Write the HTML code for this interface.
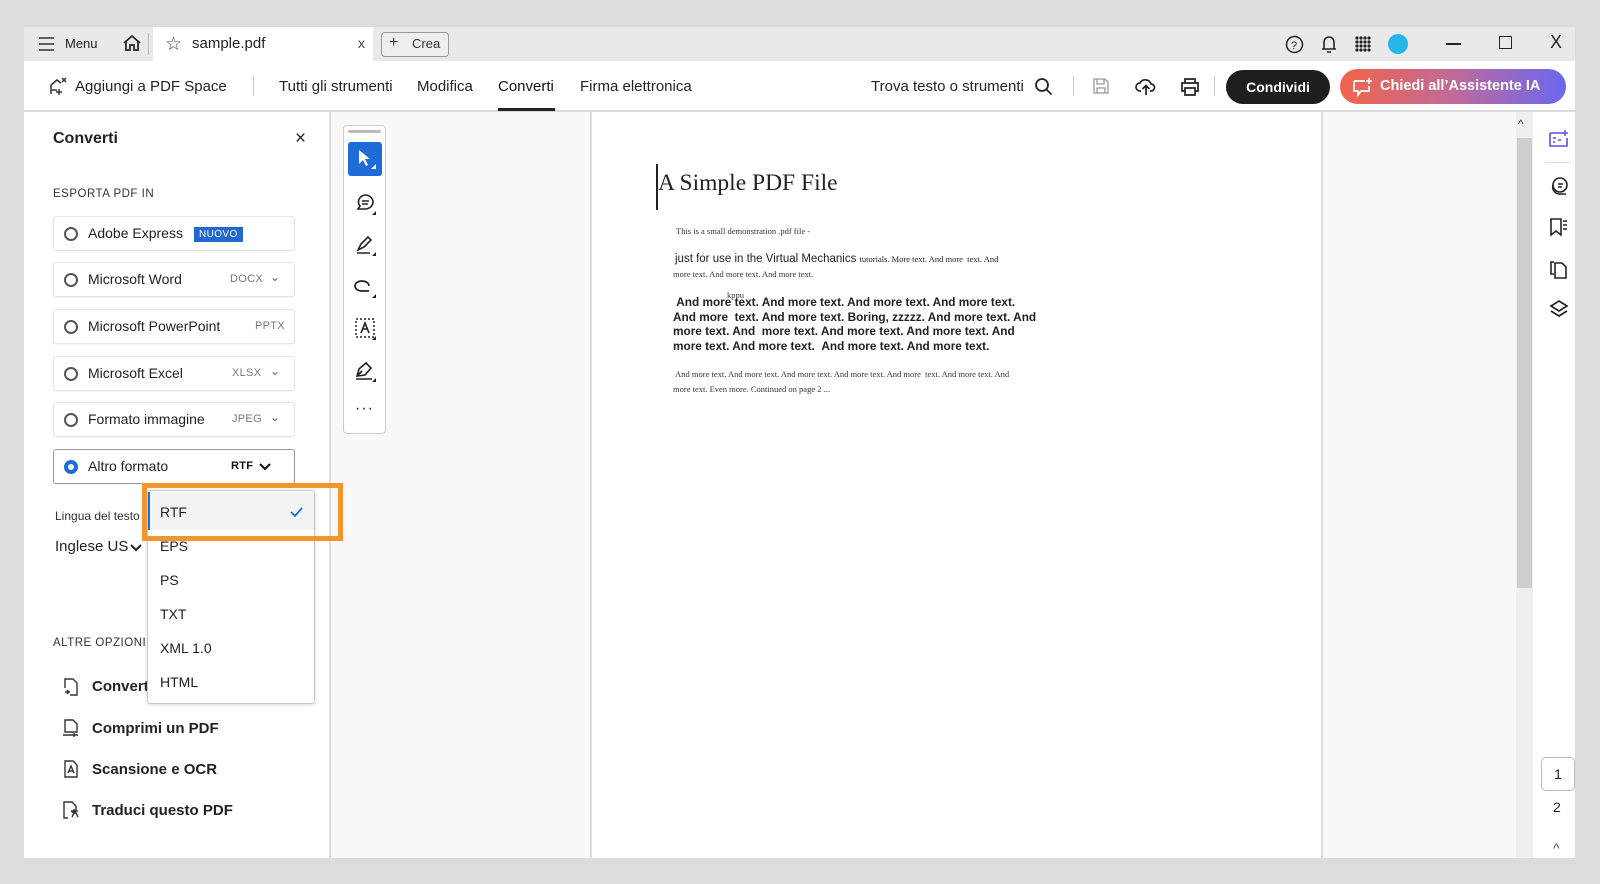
<!DOCTYPE html>
<html><head><meta charset="utf-8"><style>
*{box-sizing:border-box;margin:0;padding:0}
body{width:1600px;height:884px;background:#dcdcdc;font-family:"Liberation Sans",sans-serif;color:#222;position:relative;overflow:hidden}
.a{position:absolute}
.t{position:absolute;white-space:nowrap}
.opt{position:absolute;left:53px;width:242px;height:35px;border:1px solid #e4e4e4;border-radius:3px;background:#fff;box-shadow:0 1px 1px rgba(0,0,0,.04)}
.opt .r{position:absolute;left:10px;top:10px;width:14px;height:14px;border:2px solid #555;border-radius:50%}
.opt .l{position:absolute;left:34px;top:8px;font-size:14px;color:#222}
.opt .f{position:absolute;top:10px;font-size:11px;color:#777;letter-spacing:.3px}
.opt .c{position:absolute;right:14px;top:7px;font-size:12px;color:#666}
.dd{position:absolute;left:147px;width:168px;font-size:14px;padding-left:13px;height:34px;line-height:34px}
.ser{font-family:"Liberation Serif",serif}
.ic{position:absolute}
</style></head><body>
<!-- window -->
<div class="a" style="left:24px;top:27px;width:1551px;height:34px;background:#e9e9e9"></div>
<div class="a" style="left:153px;top:27px;width:220px;height:34px;background:#fff"></div>
<div class="a" style="left:24px;top:61px;width:1551px;height:50px;background:#fff;border-bottom:1px solid #d8d8d8"></div>
<!-- tab bar -->
<svg class="ic" style="left:38px;top:36px" width="18" height="16"><path d="M1 2h15M1 8h15M1 14h15" stroke="#333" stroke-width="1.6"/></svg>
<div class="t" style="left:65px;top:36px;font-size:13px;color:#222">Menu</div>
<svg class="ic" style="left:122px;top:33px" width="20" height="20" viewBox="0 0 20 20"><path d="M2 10L10 3l8 7M4 8v9h4v-5h4v5h4V8" fill="none" stroke="#222" stroke-width="1.7"/></svg>
<div class="a" style="left:148px;top:33px;width:1px;height:22px;background:#bbb"></div>
<div class="t" style="left:165px;top:33px;font-size:19px;color:#444">☆</div>
<div class="t" style="left:192px;top:35px;font-size:15px;color:#222">sample.pdf</div>
<div class="t" style="left:358px;top:35px;font-size:14px;color:#444">x</div>
<div class="a" style="left:381px;top:32px;width:68px;height:25px;border:1px solid #999;border-radius:4px;background:#eee"></div>
<div class="t" style="left:389px;top:34px;font-size:16px;color:#333">+</div>
<div class="t" style="left:412px;top:36px;font-size:13px;color:#333">Crea</div>
<svg class="ic" style="left:1285px;top:35px" width="19" height="19"><circle cx="9.5" cy="9.5" r="8" fill="none" stroke="#222" stroke-width="1.5"/><text x="6" y="14" font-size="11" font-family="Liberation Sans" fill="#222">?</text></svg>
<svg class="ic" style="left:1320px;top:34px" width="18" height="20"><path d="M4 15V8a5 5 0 0110 0v7zM2 15h14M7 18h4" fill="none" stroke="#222" stroke-width="1.6"/></svg>
<svg class="ic" style="left:1355px;top:36px" width="16" height="16"><g fill="#222"><circle cx="2" cy="2" r="1.6"/><circle cx="6" cy="2" r="1.6"/><circle cx="10" cy="2" r="1.6"/><circle cx="14" cy="2" r="1.6"/><circle cx="2" cy="6" r="1.6"/><circle cx="6" cy="6" r="1.6"/><circle cx="10" cy="6" r="1.6"/><circle cx="14" cy="6" r="1.6"/><circle cx="2" cy="10" r="1.6"/><circle cx="6" cy="10" r="1.6"/><circle cx="10" cy="10" r="1.6"/><circle cx="14" cy="10" r="1.6"/><circle cx="2" cy="14" r="1.6"/><circle cx="6" cy="14" r="1.6"/><circle cx="10" cy="14" r="1.6"/><circle cx="14" cy="14" r="1.6"/></g></svg>
<div class="a" style="left:1388px;top:34px;width:20px;height:20px;border-radius:50%;background:#25b5e8"></div>
<div class="a" style="left:1446px;top:43px;width:15px;height:2px;background:#222"></div>
<div class="a" style="left:1499px;top:36px;width:13px;height:13px;border:1.5px solid #222"></div>
<div class="t" style="left:1550px;top:32px;font-size:18px;color:#222">X</div>
<!-- toolbar -->
<svg class="ic" style="left:48px;top:76px" width="20" height="20" viewBox="0 0 20 20"><path d="M3 18V9l6-5 4 3M3 14h6M11 13v6M8 16h6M14 2l4 4M18 2l-4 4" fill="none" stroke="#333" stroke-width="1.5"/></svg>
<div class="t" style="left:75px;top:78px;font-size:15px">Aggiungi a PDF Space</div>
<div class="a" style="left:253px;top:76px;width:1px;height:20px;background:#ccc"></div>
<div class="t" style="left:279px;top:78px;font-size:15px">Tutti gli strumenti</div>
<div class="t" style="left:417px;top:78px;font-size:15px">Modifica</div>
<div class="t" style="left:498px;top:78px;font-size:15px;color:#111">Converti</div>
<div class="a" style="left:498px;top:108px;width:57px;height:3px;background:#222"></div>
<div class="t" style="left:580px;top:78px;font-size:15px">Firma elettronica</div>
<div class="t" style="left:871px;top:78px;font-size:15px">Trova testo o strumenti</div>
<svg class="ic" style="left:1034px;top:77px" width="20" height="20"><circle cx="8" cy="8" r="6" fill="none" stroke="#222" stroke-width="1.8"/><path d="M12.5 12.5l5 5" stroke="#222" stroke-width="1.8"/></svg>
<div class="a" style="left:1073px;top:76px;width:1px;height:20px;background:#ccc"></div>
<svg class="ic" style="left:1092px;top:77px" width="18" height="18"><path d="M2 2h11l3 3v11H2zM5 2v5h7V2M5 16v-5h8v5" fill="none" stroke="#999" stroke-width="1.3"/></svg>
<svg class="ic" style="left:1135px;top:76px" width="22" height="20"><path d="M6 15H5a4 4 0 010-8 6 6 0 0111 1 3.5 3.5 0 010 7h-1M11 19v-9M7.5 13l3.5-3.5 3.5 3.5" fill="none" stroke="#222" stroke-width="1.7"/></svg>
<svg class="ic" style="left:1180px;top:77px" width="20" height="19"><path d="M5 6V2h10v4M5 14H2V6h16v8h-3M5 11h10v7H5z" fill="none" stroke="#222" stroke-width="1.7"/></svg>
<div class="a" style="left:1214px;top:76px;width:1px;height:20px;background:#ccc"></div>
<div class="a" style="left:1226px;top:70px;width:104px;height:34px;border-radius:17px;background:#1e1e1e;color:#fff;font-size:14px;font-weight:bold;text-align:center;line-height:34px">Condividi</div>
<div class="a" style="left:1340px;top:69px;width:226px;height:35px;border-radius:18px;background:linear-gradient(90deg,#f2644a,#c06a9a 50%,#6a67f0);color:#fff;font-size:14.5px;font-weight:bold;line-height:35px;padding-left:40px">Chiedi all’Assistente IA</div>
<svg class="ic" style="left:1352px;top:77px" width="22" height="20"><path d="M2 4h11M2 4v10h4v4l3-4h8v-5" fill="none" stroke="#fff" stroke-width="1.7"/><path d="M17 1v6M14 4h6" stroke="#fff" stroke-width="1.6"/></svg>
<!-- panes -->
<div class="a" style="left:24px;top:112px;width:306px;height:746px;background:#fff;border-right:1px solid #e0e0e0"></div>
<div class="a" style="left:331px;top:112px;width:260px;height:746px;background:#f8f8f8"></div>
<div class="a" style="left:590px;top:112px;width:733px;height:746px;background:#fff;border-left:2px solid #ddd;border-right:2px solid #ddd"></div>
<div class="a" style="left:1323px;top:112px;width:193px;height:746px;background:#f8f8f8"></div>
<div class="a" style="left:1516px;top:112px;width:17px;height:746px;background:#efefef"></div>
<div class="a" style="left:1517px;top:138px;width:15px;height:450px;background:#cdcdcd"></div>
<div class="t" style="left:1518px;top:117px;font-size:12px;color:#333">^</div>
<div class="a" style="left:1533px;top:112px;width:42px;height:746px;background:#fff"></div>
<!-- right rail -->
<svg class="ic" style="left:1549px;top:129px" width="20" height="18"><path d="M1 4h13M1 4v13h17V9" fill="none" stroke="#5c4ee0" stroke-width="1.6"/><path d="M4 9h3M4 13h2M9 11h3" stroke="#5c4ee0" stroke-width="1.6"/><path d="M16 1v6M13 4h6" stroke="#5c4ee0" stroke-width="1.5"/></svg>
<div class="a" style="left:1545px;top:162px;width:26px;height:1px;background:#e0e0e0"></div>
<svg class="ic" style="left:1549px;top:176px" width="20" height="20"><circle cx="11" cy="9" r="7" fill="none" stroke="#222" stroke-width="1.6"/><path d="M4 9a7 7 0 007 9h6M9 8h5M9 11h4" fill="none" stroke="#222" stroke-width="1.6"/></svg>
<svg class="ic" style="left:1549px;top:217px" width="20" height="20"><path d="M2 2h10v16l-5-4-5 4zM14 4h4M14 8h4M14 12h4" fill="none" stroke="#222" stroke-width="1.6"/></svg>
<svg class="ic" style="left:1549px;top:258px" width="20" height="21"><path d="M5 4H2v12h3M6 5h7l4 4v11H6z" fill="none" stroke="#222" stroke-width="1.6"/></svg>
<svg class="ic" style="left:1549px;top:299px" width="20" height="20"><path d="M10 2l8 5-8 5-8-5zM2 12l8 5 8-5" fill="none" stroke="#222" stroke-width="1.7"/></svg>
<div class="a" style="left:1541px;top:757px;width:34px;height:34px;border:1px solid #bbb;border-radius:5px;font-size:14px;text-align:center;line-height:32px">1</div>
<div class="t" style="left:1553px;top:799px;font-size:14px">2</div>
<div class="t" style="left:1553px;top:840px;font-size:14px;color:#555">^</div>
<!-- left panel -->
<div class="t" style="left:53px;top:130px;font-size:16px;font-weight:bold;color:#222">Converti</div>
<div class="t" style="left:295px;top:128px;font-size:19px;color:#222">×</div>
<div class="t" style="left:53px;top:188px;font-size:11.5px;color:#333;letter-spacing:.5px">ESPORTA PDF IN</div>
<div class="opt" style="top:216px"><div class="r"></div><div class="l">Adobe Express</div><div class="a" style="left:140px;top:10px;background:#1f69d1;color:#fff;font-size:10px;padding:2px 5px;letter-spacing:.4px">NUOVO</div></div>
<div class="opt" style="top:262px"><div class="r"></div><div class="l">Microsoft Word</div><div class="f" style="left:176px">DOCX</div><div class="c">⌄</div></div>
<div class="opt" style="top:309px"><div class="r"></div><div class="l">Microsoft PowerPoint</div><div class="f" style="left:201px">PPTX</div></div>
<div class="opt" style="top:356px"><div class="r"></div><div class="l">Microsoft Excel</div><div class="f" style="left:178px">XLSX</div><div class="c">⌄</div></div>
<div class="opt" style="top:402px"><div class="r"></div><div class="l">Formato immagine</div><div class="f" style="left:178px">JPEG</div><div class="c">⌄</div></div>
<div class="opt" style="top:449px;border-color:#999"><div class="r" style="border:4px solid #1f6bd8;background:#fff"></div><div class="l">Altro formato</div><div class="f" style="left:177px;color:#111;font-weight:bold">RTF</div><svg class="a" style="left:205px;top:13px" width="12" height="8"><path d="M1 1l5 5 5-5" fill="none" stroke="#111" stroke-width="2"/></svg></div>
<div class="t" style="left:55px;top:509px;font-size:12px;color:#333">Lingua del testo</div>
<div class="t" style="left:55px;top:538px;font-size:15px;color:#222">Inglese US</div>
<svg class="ic" style="left:130px;top:544px" width="12" height="8"><path d="M1 1l5 5 5-5" fill="none" stroke="#222" stroke-width="2"/></svg>
<div class="t" style="left:53px;top:637px;font-size:11.5px;color:#333;letter-spacing:.5px">ALTRE OPZIONI</div>
<svg class="ic" style="left:61px;top:677px" width="20" height="20"><path d="M4 11V2h8l4 4v12H9M4 15h5M6 13l2 2-2 2" fill="none" stroke="#333" stroke-width="1.4"/></svg>
<div class="t" style="left:92px;top:678px;font-size:15px;font-weight:bold">Converti</div>
<svg class="ic" style="left:61px;top:718px" width="20" height="20"><path d="M4 14V2h8l4 4v8zM2 17h15M13 15v4" fill="none" stroke="#333" stroke-width="1.4"/></svg>
<div class="t" style="left:92px;top:720px;font-size:15px;font-weight:bold">Comprimi un PDF</div>
<svg class="ic" style="left:61px;top:759px" width="20" height="20"><path d="M4 18V2h8l4 4v12zM7 14l3-7 3 7M8 12h4" fill="none" stroke="#333" stroke-width="1.4"/></svg>
<div class="t" style="left:92px;top:761px;font-size:15px;font-weight:bold">Scansione e OCR</div>
<svg class="ic" style="left:61px;top:800px" width="22" height="20"><path d="M7 18H3V2h8l4 4v4M10 11h7M13 9v2M11 17l3-6 3 6M14 14l-4-3" fill="none" stroke="#333" stroke-width="1.4"/></svg>
<div class="t" style="left:92px;top:802px;font-size:15px;font-weight:bold">Traduci questo PDF</div>
<!-- dropdown -->
<div class="a" style="left:147px;top:490px;width:168px;height:214px;background:#fff;border:1px solid #c8c8c8;border-radius:3px;box-shadow:0 1px 4px rgba(0,0,0,.15)"></div>
<div class="a" style="left:148px;top:492px;width:166px;height:38px;background:#f3f3f3;border-left:2px solid #1f6bd8"></div>
<div class="dd" style="top:495px">RTF</div>
<svg class="ic" style="left:290px;top:507px" width="13" height="10"><path d="M1 5l4 4 7-8" fill="none" stroke="#1f6bd8" stroke-width="1.8"/></svg>
<div class="dd" style="top:529px">EPS</div>
<div class="dd" style="top:563px">PS</div>
<div class="dd" style="top:597px">TXT</div>
<div class="dd" style="top:631px">XML 1.0</div>
<div class="dd" style="top:665px">HTML</div>
<div class="a" style="left:142px;top:483px;width:201px;height:58px;border:5px solid #f0962d"></div>
<!-- tool strip -->
<div class="a" style="left:343px;top:125px;width:43px;height:309px;background:#fff;border:1px solid #ccc;border-radius:4px"></div>
<div class="a" style="left:348px;top:130px;width:33px;height:3px;background:#bbb;border-radius:2px"></div>
<div class="a" style="left:348px;top:142px;width:34px;height:34px;background:#1f6bd8;border-radius:3px"></div>
<svg class="ic" style="left:355px;top:148px" width="22" height="22"><path d="M4 2v14l4-4 3 6 2-1-3-6h5z" fill="#fff"/><path d="M21 16v5h-5z" fill="#fff"/></svg>
<svg class="ic" style="left:354px;top:192px" width="24" height="24"><path d="M11 3a8 7 0 110 14H4l2-3a8 7 0 015-11zM8 9h7M8 12h6" fill="none" stroke="#222" stroke-width="1.6"/><path d="M22 19v4h-4z" fill="#222"/></svg>
<svg class="ic" style="left:354px;top:233px" width="24" height="24"><path d="M4 17l3-6 7-7 3 3-7 7zM3 20h13" fill="none" stroke="#222" stroke-width="1.6"/><path d="M22 19v4h-4z" fill="#222"/></svg>
<svg class="ic" style="left:354px;top:275px" width="24" height="24"><path d="M15 11a7 5 0 10-7 5h6M12 16l3 0" fill="none" stroke="#222" stroke-width="1.7"/><path d="M22 19v4h-4z" fill="#222"/></svg>
<svg class="ic" style="left:354px;top:317px" width="24" height="24"><rect x="2" y="2" width="18" height="18" fill="none" stroke="#222" stroke-width="1.5" stroke-dasharray="2 2"/><path d="M7 16l4-10 4 10M8.5 12h5" fill="none" stroke="#222" stroke-width="1.6"/><path d="M22 19v4h-4z" fill="#222"/></svg>
<svg class="ic" style="left:354px;top:359px" width="24" height="24"><path d="M3 17l2-7 7-6 5 5-6 7zM3 17l5-5M2 20h16" fill="none" stroke="#222" stroke-width="1.6"/><path d="M22 19v4h-4z" fill="#222"/></svg>
<div class="t" style="left:355px;top:400px;font-size:16px;color:#222;letter-spacing:1px">···</div>
<!-- document -->
<div class="a" style="left:656px;top:164px;width:1.5px;height:46px;background:#222"></div>
<div class="t ser" style="left:658px;top:170px;font-size:23.5px;color:#222">A Simple PDF File</div>
<div class="t ser" style="left:676px;top:226px;font-size:8.5px;color:#333">This is a small demonstration .pdf file -</div>
<div class="t" style="left:675px;top:253px;font-size:11.5px;color:#222">just for use in the Virtual Mechanics <span class="ser" style="font-size:8.5px">tutorials. More text. And more &nbsp;text. And</span></div>
<div class="t ser" style="left:673px;top:269px;font-size:8.5px;color:#333">more text. And more text. And more text.</div>
<div class="t ser" style="left:727px;top:290px;font-size:8.5px;color:#333">kppu</div>
<div class="a" style="left:673px;top:295px;font-size:11.8px;font-weight:bold;line-height:14.6px;color:#222;white-space:nowrap">&nbsp;And more text. And more text. And more text. And more text.<br>And more &nbsp;text. And more text. Boring, zzzzz. And more text. And<br>more text. And &nbsp;more text. And more text. And more text. And<br>more text. And more text. &nbsp;And more text. And more text.</div>
<div class="a ser" style="left:673px;top:367px;font-size:8.5px;line-height:15px;color:#333;white-space:nowrap">&nbsp;And more text. And more text. And more text. And more text. And more &nbsp;text. And more text. And<br>more text. Even more. Continued on page 2 ...</div>
</body></html>
